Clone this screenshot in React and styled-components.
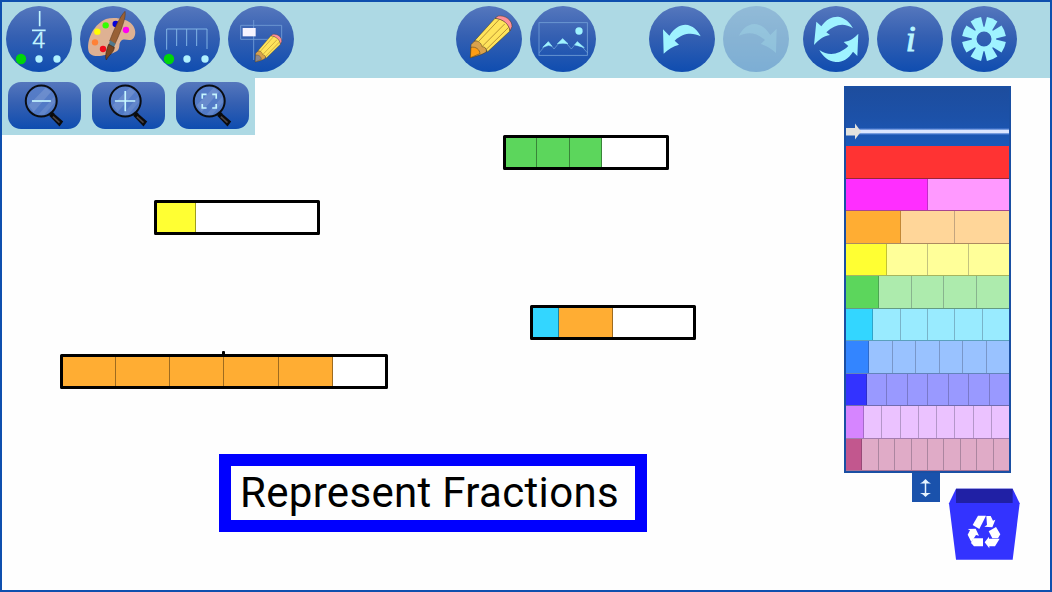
import React from "react";
import styled, { createGlobalStyle, css } from "styled-components";

const GlobalStyle = createGlobalStyle`
    * {
        box-sizing: border-box;
    }
    body {
        margin: 0;
        font-family: Roboto, "Liberation Sans", sans-serif;
    }
`
const Screen = styled.div`
    position: relative;
    width: 1052px;
    height: 592px;
    overflow: hidden;
    background-color: #fefefe;
    border: 2px solid #0e4fae;
`
const Toolbar = styled.header`
    display: flex;
    height: 76px;
    padding: 4px 33px 0 4px;
    background-color: #add9e4;
`
const Group = styled.div`
    display: flex;
    gap: 8px;
    margin-left: ${props => props.$before || 0}px;
`
const blue = css`
    border: none;
    padding: 0;
    background: linear-gradient(#5577bd, #3560b2 45%, #0f4db0);
`
const RoundButton = styled.button`
    ${blue}
    width: 66px;
    height: 66px;
    border-radius: 50%;
    opacity: ${props => props.disabled ? 0.3 : 1};
`
const ZoomBar = styled.nav`
    display: flex;
    gap: 11.3px;
    width: 253px;
    height: 57px;
    padding: 4px 6px;
    background-color: #add9e4;
`
const ZoomButton = styled.button`
    ${blue}
    width: 73px;
    height: 47px;
    border-radius: 13px;
`
const Icon = styled.svg`
    display: block;
    width: 100%;
    height: 100%;
`
const Place = styled.div`
    position: absolute;
    left: ${props => props.$x}px;
    top: ${props => props.$y}px;
`
const Bar = styled.div`
    display: flex;
    position: relative;
    width: ${props => props.$width}px;
    height: 35px;
    padding: 1.5px;
    background-color: white;
    &::after {
        content: "";
        position: absolute;
        inset: 0;
        border: 3px solid black;
        border-radius: 1.5px;
    }
`
const Piece = styled.div`
    width: ${props => 163 / props.$parts}px;
    background-color: ${props => props.$color};
    border-right: 1px solid rgba(0, 0, 0, 0.38);
`
const Tick = styled.div`
    position: absolute;
    left: 162px;
    top: -3px;
    width: 3px;
    height: 4px;
    background-color: black;
    border-radius: 1px 1px 0 0;
`
const Label = styled.div`
    display: flex;
    align-items: center;
    width: 428px;
    height: 78px;
    padding: 0 0 2px 9px;
    border: 12px solid #0000ff;
    background-color: #fefefe;
    color: black;
    font-size: 42px;
    letter-spacing: 0.32px;
    white-space: nowrap;
`
const Panel = styled.aside`
    display: flex;
    flex-direction: column;
    width: 167px;
    height: 387px;
    border: 2px solid #1a4fa3;
`
const PanelHead = styled.div`
    height: 58px;
    background: linear-gradient(#1d4d9e, #1c51a8 50%, #1a58b8);
`
const Row = styled.div`
    display: flex;
    flex: 1;
    border-bottom: 1px solid ${props => props.$line};
`
const Cell = styled.div`
    flex: 1;
    background-color: ${props => props.$color};
    border-right: 1px solid rgba(40, 40, 60, 0.28);
    &:last-child {
        border-right: none;
    }
`
const Resize = styled.button`
    ${blue}
    display: block;
    width: 28px;
    height: 29px;
    background: #1a52ac;
`
const Bin = styled.div`
    width: 72px;
    height: 72px;
`

const ICE = "#9ff3ff"

const rows = [
    { color: "#ff3333", light: "#ff3333", line: "#9a2638" },
    { color: "#ff2eff", light: "#ff99ff", line: "#a7468f" },
    { color: "#ffad33", light: "#ffd699", line: "#ad8a60" },
    { color: "#ffff33", light: "#ffff99", line: "#a6b55f" },
    { color: "#5cd65c", light: "#adebad", line: "#659b83" },
    { color: "#33d6ff", light: "#99ebff", line: "#5ba0bd" },
    { color: "#3385ff", light: "#99c2ff", line: "#6384bb" },
    { color: "#3333ff", light: "#9999ff", line: "#716cae" },
    { color: "#d685ff", light: "#ebc2ff", line: "#a47caf" },
    { color: "#c2578e", light: "#e0abc7", line: "#a97498" },
]

function Dots({ x }) {
    return (
        <>
            <circle cx={x} cy="177" r="15.5" fill="#00d60a" />
            <circle cx={x + 54} cy="177" r="11" fill="#b0f1ff" />
            <circle cx={x + 108} cy="177" r="11" fill="#b0f1ff" />
        </>
    )
}

function Magnifier({ children }) {
    return (
        <Icon viewBox="0 0 219 141">
            <path d="M126 89 L137 98" stroke="#111" strokeWidth="9" />
            <path d="M124 101 L134 91 L166 119 L155 134 Z" fill="#0b0b0d" />
            <path d="M135 104 L155 122" stroke="#4b4343" strokeWidth="5" />
            <circle cx="100" cy="57" r="46.5" fill="#587fc9" fillOpacity="0.85" stroke="#0a0d12" strokeWidth="6" />
            <path d="M62 70 L113 17 L130 29 L77 90 Z" fill="white" opacity="0.13" />
            <path d="M91 98 L139 44 L141 61 L109 98 Z" fill="white" opacity="0.1" />
            <g fill="none" stroke="#c6f6ff" strokeWidth="5">{children}</g>
        </Icon>
    )
}

function Pencil({ tip }) {
    return (
        <g stroke="#43381d" strokeWidth="1.5" strokeLinejoin="round">
            <path d="M91 173 L93 134 C99 126 107 121 110 122 C127 125 141 139 139 156 C126 164 110 169 91 173 Z" fill="#d9a14c" />
            <path d="M91 173 L93 142 C108 139 119 149 120 161 Z" fill={tip} />
            <path d="M104 122 L165 55 C188 56 208 70 210 93 L142 156 C140 145 134 140 126 140 C124 129 115 122 104 122 Z" fill="#ffe45b" />
            <path d="M115 125 L177 59 M126 140 L194 72 M138 149 L205 83" fill="none" stroke="#a9822a" strokeWidth="2.5" />
            <path d="M165 55 L174 48 C195 45 217 60 216 80 L210 93 C207 72 189 57 165 55 Z" fill="#ff8f99" />
        </g>
    )
}

const undoPath = "M69 88 L88 107 C103 84 119 74 136 74 C158 75 174 92 182 109 C158 98 132 97 104 122 L117 134 C98 139 85 148 71 161 Z"

export default class App extends React.Component {

    render() {
        return (
            <Screen>
                <GlobalStyle />
                <Toolbar>
                    <Group>
                        <RoundButton>
                            <Icon viewBox="18 18 198 198">
                                <path d="M119 33 V79 M96 91 H137" stroke="#c3f5ff" strokeWidth="5" />
                                <text x="116" y="144" textAnchor="middle" fontFamily="Open Sans" fontWeight="300" fontSize="64" fill="#c3f5ff" stroke="#c3f5ff" strokeWidth="2">4</text>
                                <Dots x={63} />
                            </Icon>
                        </RoundButton>
                        <RoundButton>
                            <Icon viewBox="240 18 198 198">
                                <path d="M265 150 C261 112 284 72 318 57 C343 50 382 56 397 74 C407 86 409 103 401 114 C389 128 373 112 363 123 C354 132 363 145 350 154 C333 164 322 164 305 167 C282 170 267 166 265 150 Z" fill="#deb193" />
                                <circle cx="292" cy="95" r="9.5" fill="#ffff00" />
                                <circle cx="317" cy="76" r="9.5" fill="#33ff00" />
                                <circle cx="347" cy="72" r="9.5" fill="#0800d8" />
                                <circle cx="378" cy="90" r="9.5" fill="#ff00f2" />
                                <circle cx="285" cy="127" r="9.5" fill="#ff8136" />
                                <circle cx="309" cy="147" r="9.5" fill="#f00c1c" />
                                <path d="M375 34 C380 50 361 98 345 132 L329 123 C340 91 362 46 375 34 Z" fill="#996035" stroke="#55351f" strokeWidth="1.5" />
                                <path d="M330 121 L347 131 L342 142 L326 134 Z" fill="#50798d" />
                                <path d="M326 133 L343 142 C342 158 326 165 319 180 C314 169 320 147 326 133 Z" fill="#7b451f" stroke="#392719" strokeWidth="2" />
                            </Icon>
                        </RoundButton>
                        <RoundButton>
                            <Icon viewBox="12 18 198 198">
                                <path d="M50 149 V87 H171 V147 M80 87 V138 M110 87 V138 M140 87 V138" fill="none" stroke="#86b9e8" strokeWidth="2.8" />
                                <Dots x={57} />
                            </Icon>
                        </RoundButton>
                        <RoundButton>
                            <Icon viewBox="234 18 198 198">
                                <path d="M272 76 H395 V118 H272 Z M311 60 V180" fill="none" stroke="#739fd7" strokeWidth="2.5" />
                                <rect x="278" y="84" width="39" height="25" fill="#f5f3ff" />
                                <g transform="translate(258 71) scale(0.635 0.665)">
                                    <Pencil tip="#8a8790" />
                                </g>
                            </Icon>
                        </RoundButton>
                    </Group>
                    <Group $before={162}>
                        <RoundButton>
                            <Icon viewBox="48 18 198 198">
                                <Pencil tip="#ff9d13" />
                            </Icon>
                        </RoundButton>
                        <RoundButton>
                            <Icon viewBox="270 18 198 198">
                                <rect x="297" y="68" width="145" height="98" fill="none" stroke="#719ed6" strokeWidth="2.5" />
                                <circle cx="417" cy="93" r="11" fill={ICE} />
                                <path d="M298 158 L325 125 L342 147 L368 116 L394 147 L412 125 L442 158" fill="none" stroke="#8fc3ec" strokeWidth="1.5" />
                                <path d="M308 142 L325 125 L336 139 L326 136 Z M352 131 L368 116 L384 131 L369 130 Z M404 135 L412 125 L433 143 L413 137 Z" fill={ICE} stroke={ICE} strokeWidth="1.5" />
                            </Icon>
                        </RoundButton>
                    </Group>
                    <Group $before={53}>
                        <RoundButton>
                            <Icon viewBox="27 18 198 198">
                                <path d={undoPath} fill={ICE} />
                            </Icon>
                        </RoundButton>
                        <RoundButton disabled>
                            <Icon viewBox="249 18 198 198">
                                <path d={undoPath} fill={ICE} opacity="0.35" transform="translate(479 -2) scale(-1 1)" />
                            </Icon>
                        </RoundButton>
                    </Group>
                    <Group $before={14}>
                        <RoundButton>
                            <Icon viewBox="24 18 198 198">
                                <path d="M64 65 L79 79 C94 57 112 49 130 50 C150 53 165 68 174 85 C148 67 120 71 94 97 L105 105 C85 108 70 120 57 135 Z" fill={ICE} />
                                <path d="M190 101 L187 168 L174 155 C160 178 140 187 122 186 C100 184 84 170 73 150 C100 168 130 166 160 138 L146 126 C165 123 178 114 190 101 Z" fill={ICE} />
                            </Icon>
                        </RoundButton>
                        <RoundButton>
                            <Icon viewBox="246 18 198 198">
                                <text x="347" y="152" textAnchor="middle" fontFamily="Liberation Serif" fontStyle="italic" fontSize="108" fill="#b9f5ff" stroke="#b9f5ff" strokeWidth="3">i</text>
                            </Icon>
                        </RoundButton>
                        <RoundButton>
                            <Icon viewBox="468 18 198 198">
                                <g transform="translate(567 117)" fill={ICE}>
                                    {[0, 1, 2, 3, 4, 5, 6, 7].map(n => (
                                        <path key={n} d="M-17 -64 Q0 -68 17 -64 L12 -30 H-12 Z" transform={`rotate(${22.5 + n * 45})`} />
                                    ))}
                                    <circle r="29.5" fill="none" stroke={ICE} strokeWidth="14" />
                                </g>
                            </Icon>
                        </RoundButton>
                    </Group>
                </Toolbar>
                <ZoomBar>
                    <ZoomButton>
                        <Magnifier><path d="M72 57 H129" /></Magnifier>
                    </ZoomButton>
                    <ZoomButton>
                        <Magnifier><path d="M69 57 H130 M100 27 V88" /></Magnifier>
                    </ZoomButton>
                    <ZoomButton>
                        <Magnifier><path d="M79 50 V37 H92 M109 37 H121 V50 M121 66 V78 H109 M92 78 H79 V66" /></Magnifier>
                    </ZoomButton>
                </ZoomBar>

                {/* pieces lying on the free canvas */}
                <Place $x={152} $y={198}>
                    <Bar $width={165.5}>
                        <Piece $parts={4} $color="#ffff33" />
                    </Bar>
                </Place>
                <Place $x={501} $y={133}>
                    <Bar $width={165.5}>
                        <Piece $parts={5} $color="#5cd65c" />
                        <Piece $parts={5} $color="#5cd65c" />
                        <Piece $parts={5} $color="#5cd65c" />
                    </Bar>
                </Place>
                <Place $x={528} $y={303}>
                    <Bar $width={165.5}>
                        <Piece $parts={6} $color="#33d6ff" />
                        <Piece $parts={3} $color="#ffad33" />
                    </Bar>
                </Place>
                <Place $x={58} $y={352}>
                    <Bar $width={328}>
                        {[1, 2, 3, 4, 5].map(n => <Piece key={n} $parts={3} $color="#ffad33" />)}
                        <Tick />
                    </Bar>
                </Place>
                <Place $x={217} $y={452}>
                    <Label>Represent Fractions</Label>
                </Place>

                <Place $x={842} $y={84}>
                    <Panel>
                        <PanelHead>
                            <Icon viewBox="0 0 163 58">
                                <defs>
                                    <linearGradient id="glow" x1="0" y1="0" x2="0" y2="1">
                                        <stop offset="0" stopColor="#4a7fe0" stopOpacity="0.2" />
                                        <stop offset="0.35" stopColor="#dbe5ff" />
                                        <stop offset="0.65" stopColor="#dbe5ff" />
                                        <stop offset="1" stopColor="#4a7fe0" stopOpacity="0.2" />
                                    </linearGradient>
                                </defs>
                                <rect x="13" y="40" width="150" height="7" fill="url(#glow)" />
                                <path d="M0 40 H9 V35.5 L15 43.5 L9 51.5 V47.5 H0 Z" fill="#e2e2de" />
                            </Icon>
                        </PanelHead>
                        {rows.map((row, i) => (
                            <Row key={i} $line={row.line}>
                                {Array.from({ length: i + 1 }, (_, n) => (
                                    <Cell key={n} $color={n === 0 ? row.color : row.light} />
                                ))}
                            </Row>
                        ))}
                    </Panel>
                </Place>
                <Place $x={910} $y={471}>
                    <Resize>
                        <Icon viewBox="0 0 28 29">
                            <path d="M13.5 8 V22" stroke="#e6f3ff" strokeWidth="1.5" />
                            <path d="M8 10.5 Q11 9 13.5 6 Q16 9 19 10.5 Z M8 20 Q11 21 13.5 24 Q16 21 19 20 Z" fill="#e6f3ff" />
                        </Icon>
                    </Resize>
                </Place>
                <Place $x={946} $y={486}>
                    <Bin>
                        <Icon viewBox="144 84 216 216">
                            <path d="M168 86 H338 L359 130 L338 299 H168 L147 130 Z" fill="#3333ff" />
                            <path d="M168 86 H338 V129 H168 Z" fill="#2020a5" />
                            <g fill="white">
                                <path d="M234 167 H258 L238 207 L218 195 Z" />
                                <path d="M259 168 H272 L279 182 L286 179 L277 202 L253 200 L261 195 Z" />
                                <path d="M266 214 L288 201 L301 223 L294 235 L277 235 Z" />
                                <path d="M267 230 V236 H299 L285 259 H268 V265 L254 247 Z" />
                                <path d="M220 235 H249 V259 H222 L213 249 Z" />
                                <path d="M203 207 L227 206 L237 227 L228 225 L214 246 L203 224 L210 211 Z" />
                            </g>
                        </Icon>
                    </Bin>
                </Place>
            </Screen>
        )
    }
}
